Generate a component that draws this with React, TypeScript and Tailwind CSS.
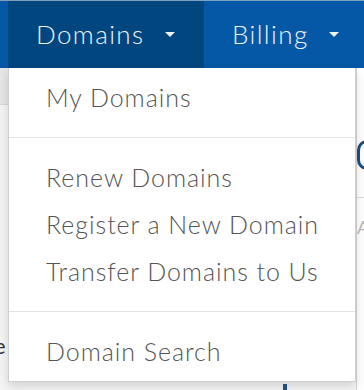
import { useState } from 'react';

const sections = [
  ['My Domains'],
  ['Renew Domains', 'Register a New Domain', 'Transfer Domains to Us'],
  ['Domain Search'],
];

const Caret = () => (
  <span className="ml-[20px] inline-block h-0 w-0 border-x-[5px] border-t-[5px] border-x-transparent border-t-current" />
);

export default function App() {
  const [open] = useState(true);

  return (
    <div className="relative h-[390px] w-[364px] overflow-hidden bg-[#f5f5f5] font-['Lato',sans-serif]">
      <nav className="flex h-[68px] border-t border-[#7f9fbf] bg-[#0558a6] pl-2 text-[26px] font-light tracking-[1.4px] text-[#eef4fa]">
        <div className="flex w-[196px] items-center bg-[#02467f] pl-7">
          Domains
          <Caret />
        </div>
        <div className="flex items-center pl-7">
          Billing
          <Caret />
        </div>
      </nav>

      {/* page behind the menu */}
      <div className="flex h-[322px]">
        <div className="flex w-2 flex-col">
          <div className="h-[37px] border-b border-[#d8d8d8] bg-[#e6e6e6]" />
          <div className="mt-[230px] text-[22px] leading-none text-[#333]">
            <span className="-ml-[6px]">e</span>
          </div>
        </div>
        <div className="flex-1" />
        <div className="flex w-2 flex-col border-l border-[#d6d6d6] bg-white">
          <div className="mt-[72px] h-[30px] w-[20px] rounded-full border-[3px] border-[#1d4f7c]" />
          <div className="mt-[27px] border-b border-[#d8d8d8]" />
          <div className="mt-[20px] text-[18px] leading-none text-[#bbb]">A</div>
        </div>
      </div>

      {open && (
        <div className="absolute left-2 top-[68px] w-[348px] border border-t-0 border-[#cfcfcf] bg-white py-[6px] text-[25px] font-light tracking-[0.95px] text-[#555] shadow-[0_4px_10px_rgba(0,0,0,0.15)]">
          {sections.map((items, i) => (
            <div key={i}>
              {i > 0 && <div className="my-[16px] h-px bg-[#e3e3e3]" />}
              {items.map((item) => (
                <div key={item} className="flex h-[47px] items-center pl-[37px]">
                  {item}
                </div>
              ))}
            </div>
          ))}
        </div>
      )}
      <div className="absolute bottom-0 left-[283px] h-[6px] w-[4px] bg-[#1d4f7c]" />
    </div>
  );
}
